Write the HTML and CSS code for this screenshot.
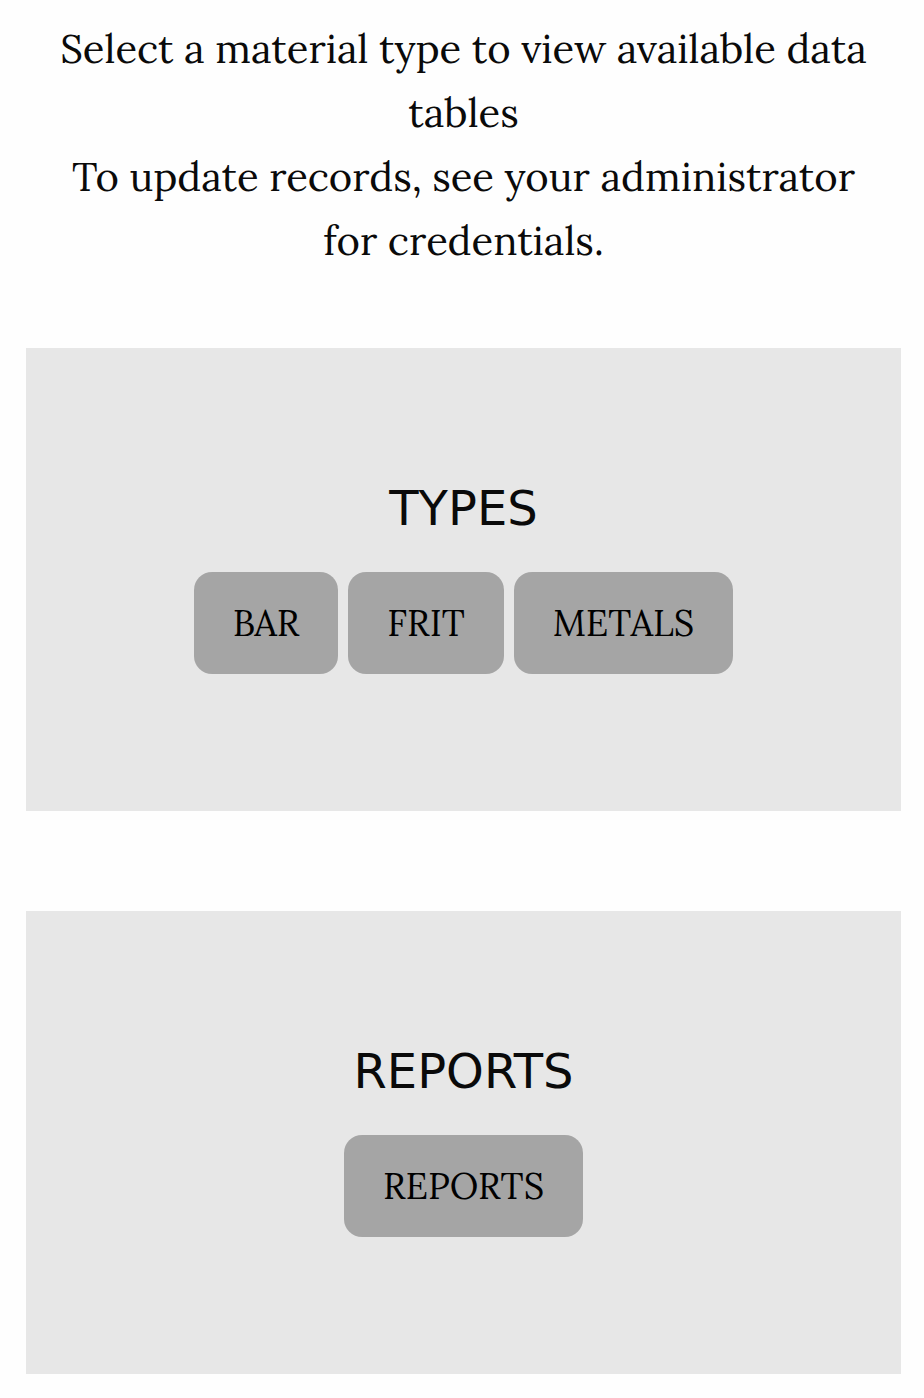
FILE: index.html
```html
<!DOCTYPE html>
<html lang="en">
<head>
<meta charset="utf-8">
<meta name="viewport" content="width=device-width, initial-scale=1">
<title>Material types</title>
<link rel="stylesheet" href="styles.css">
</head>
<body>
<main class="page">
  <p class="intro">Select a material type to view available data tables<br>To update records, see your administrator for credentials.</p>
  <section class="panel" aria-labelledby="types-title">
    <h2 class="panel-title" id="types-title">TYPES</h2>
    <div class="actions">
      <button class="action" type="button">BAR</button>
      <button class="action" type="button">FRIT</button>
      <button class="action" type="button">METALS</button>
    </div>
  </section>
  <section class="panel" aria-labelledby="reports-title">
    <h2 class="panel-title" id="reports-title">REPORTS</h2>
    <div class="actions">
      <button class="action" type="button">REPORTS</button>
    </div>
  </section>
</main>
</body>
</html>
```

FILE: styles.css
```css
* {
  box-sizing: border-box;
}

body {
  margin: 0;
  background: #fefefe;
  color: #0a0a0a;
  font-family: Lora, "Liberation Serif", serif;
}

.page {
  padding: 17px 23px 24px 26px;
}

.intro {
  margin: 0 0 75px;
  padding: 0 32px;
  font-size: 40px;
  line-height: 64px;
  text-align: center;
}

.panel {
  padding: 128px 24px 137px;
  background: #e7e7e7;
  text-align: center;
}

.panel + .panel {
  margin-top: 100px;
}

.panel-title {
  margin: 0 0 32px;
  font-family: Verdana, "DejaVu Sans", sans-serif;
  font-size: 48px;
  font-weight: 400;
  line-height: 64px;
}

.actions {
  display: flex;
  flex-wrap: wrap;
  justify-content: center;
  gap: 10px;
}

.action {
  padding: 26px 39px;
  border: 0;
  border-radius: 18px;
  background: #a5a5a5;
  color: #000;
  font-family: inherit;
  font-size: 36px;
  line-height: 50px;
  cursor: pointer;
}
```
